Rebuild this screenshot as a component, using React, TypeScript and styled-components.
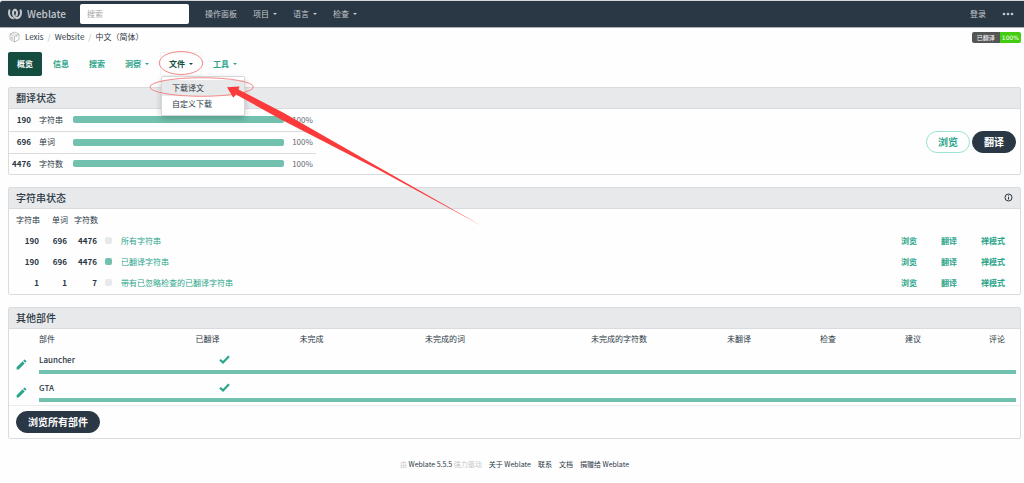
import React from 'react';
import styled, { createGlobalStyle, css } from 'styled-components';
import { SiWeblate } from 'react-icons/si';
import { MdEdit } from 'react-icons/md';

const navy = '#2a3744';
const green = '#2ba58a';
const bar = '#71c1ae';
const line = '#d9dbde';

const GlobalStyle = createGlobalStyle`
  *, *::before, *::after { box-sizing: border-box; }
  body {
    margin: 0;
    background: #fefefe;
    color: ${navy};
    font-family: 'Noto Sans CJK SC', 'Noto Sans', sans-serif;
    font-size: 8px;
    line-height: 12px;
  }
  a { color: inherit; text-decoration: none; }
  button, input { font: inherit; }
  ul, ol { list-style: none; margin: 0; padding: 0; }
`;

const Page = styled.div`
  position: relative;
`;

const NavBar = styled.nav`
  display: flex;
  align-items: center;
  height: 28px;
  padding: 0 10px 0 8px;
  background: ${navy};
  color: #c3c8cd;
  border-top: 1px solid #d5d8da;
  border-bottom: 1px solid #a9afb4;
  border-radius: 3px 0 0 0;
`;

const Brand = styled.a`
  display: flex;
  align-items: center;
  gap: 5px;
  width: 72px;
  font-size: 10px;
  font-weight: 500;
`;

const SearchInput = styled.input`
  width: 109px;
  height: 20px;
  margin-right: 8px;
  padding: 0 7px 1px;
  border: 0;
  border-radius: 2px;
  background: #fff;
  color: ${navy};
  &::placeholder { color: #a3a3a3; opacity: 1; }
`;

const NavList = styled.ul`
  display: flex;
  flex: 1;
`;

const NavLink = styled.a`
  display: flex;
  align-items: center;
  gap: 4px;
  padding: 0 8px;
`;

const Caret = styled.span`
  width: 0;
  border: 2px solid transparent;
  border-top-color: currentColor;
  border-bottom: 0;
`;

const NavEnd = styled.div`
  display: flex;
  align-items: center;
  gap: 16px;
`;

const MoreButton = styled.button`
  display: flex;
  padding: 0;
  border: 0;
  background: none;
  color: inherit;
`;

const Main = styled.main`
  padding: 0 3px 0 8px;
`;

const TopRow = styled.div`
  display: flex;
  justify-content: space-between;
  align-items: center;
  height: 18px;
`;

const Crumbs = styled.ol`
  display: flex;
  align-items: center;
  padding-left: 1px;
  li + li::before {
    content: '/';
    padding: 0 4px;
    color: #b5b9bd;
  }
  li:first-child { padding-right: 5px; }
  li:nth-child(2)::before { content: none; }
  svg { display: block; }
`;

const Badge = styled.a`
  display: flex;
  height: 11px;
  overflow: hidden;
  border-radius: 2px;
  font: 6px/11px 'DejaVu Sans', 'Noto Sans CJK SC', sans-serif;
  color: #fff;
`;

const BadgePart = styled.span<{ $tone: string; $wide?: boolean }>`
  padding: 0 ${p => (p.$wide ? 5 : 2)}px;
  background: ${p => p.$tone};
`;

const Tabs = styled.ul`
  display: flex;
  gap: 2px;
  margin: 6px 0 11px;
`;

const TabItem = styled.li`
  position: relative;
`;

const Tab = styled.a<{ $state?: 'active' | 'open' }>`
  display: flex;
  align-items: center;
  gap: 4px;
  height: 24px;
  padding: 0 9px;
  border-radius: 2px;
  color: ${green};
  font-weight: 700;
  ${p => p.$state === 'active' && css`background: #144d3f; color: #fff;`}
  ${p => p.$state === 'open' && css`box-shadow: inset 0 0 0 1px #f3f4f4; color: #144d3f;`}
`;

const Menu = styled.ul`
  position: absolute;
  z-index: 1;
  top: 100%;
  left: 1px;
  width: 84px;
  padding: 3px 0;
  background: #fff;
  border: 1px solid #d5d7d9;
  border-radius: 2px;
  box-shadow: 0 3px 6px rgba(0, 0, 0, 0.2);
`;

const MenuLink = styled.a<{ $hover?: boolean }>`
  display: block;
  padding: 0 10px;
  line-height: 16px;
  background: ${p => (p.$hover ? '#e8e9ea' : 'transparent')};
`;

const Panel = styled.section`
  margin-bottom: 12px;
  border: 1px solid ${line};
  border-radius: 2px;
`;

const PanelHead = styled.header`
  display: flex;
  align-items: center;
  justify-content: space-between;
  height: 21px;
  padding: 0 7px 1px;
  background: #e8e9eb;
  border-bottom: 1px solid ${line};
`;

const PanelTitle = styled.h4`
  margin: 0;
  font-size: 10px;
  font-weight: 500;
  line-height: 16px;
`;

const StatusBody = styled.div`
  display: flex;
  align-items: center;
  justify-content: space-between;
  padding-right: 4px;
`;

const Table = styled.table`
  width: 100%;
  border-collapse: collapse;
  table-layout: fixed;
  th, td { padding: 0; text-align: right; font-weight: 400; }
`;

const StatusTable = styled(Table)`
  width: 30.5%;
  td { height: 22px; }
  tr:last-child td { height: 21px; }
  tr + tr td { border-top: 1px solid ${line}; }
  td:first-child { width: 22px; font-weight: 700; }
  th { width: 42px; padding-left: 8px; text-align: left; }
  tr + tr th { border-top: 1px solid ${line}; }
  td:last-child { width: 32px; padding-left: 8px; text-align: left; color: #5f6973; }
`;

const Progress = styled.div<{ $thin?: boolean }>`
  height: ${p => (p.$thin ? 4 : 7)}px;
  border-radius: ${p => (p.$thin ? 0 : 2)}px;
  background: ${bar};
`;

const Actions = styled.div`
  display: flex;
  gap: 2px;
`;

const Pill = styled.button<{ $outline?: boolean }>`
  height: 22px;
  padding: 0 11px;
  border: 1px solid ${p => (p.$outline ? '#9be3d2' : navy)};
  border-radius: 11px;
  background: ${p => (p.$outline ? '#fff' : navy)};
  color: ${p => (p.$outline ? green : '#fff')};
  font-size: 10px;
  font-weight: 700;
  line-height: 16px;
`;

const StringTable = styled(Table)`
  margin-bottom: 1px;
  td { height: 21px; font-weight: 700; }
  th { height: 21px; }
  td:nth-child(-n + 3) { padding-right: 1px; }
  td:nth-child(n + 5) { padding-left: 1px; text-align: left; color: ${green}; }
  td:nth-child(5) { padding-left: 6px; font-weight: 400; }
`;

const Swatch = styled.span<{ $on?: boolean }>`
  display: block;
  width: 7px;
  height: 7px;
  margin-left: 7px;
  border-radius: 2px;
  background: ${p => (p.$on ? bar : '#e8e9eb')};
`;

const PartTable = styled(Table)`
  thead th { height: 20px; padding-right: 15px; }
  thead th:nth-child(2), tbody th { padding: 0 0 0 5px; text-align: left; }
  tbody th { height: 21px; font-weight: 500; }
  svg { display: block; margin: 0 auto; }
`;

const CheckCell = styled.td`
  && { padding-right: 5px; }
  svg { margin: 0 0 0 auto; }
`;

const EditCell = styled.td`
  color: ${green};
  && { padding-top: 3px; }
`;

const BarCell = styled.td`
  height: 7px;
  vertical-align: top;
  && { padding: 0 4px 0 5px; }
`;

const PanelFoot = styled.footer`
  padding: 5px 7px;
  border-top: 1px solid #eceded;
`;

const Footer = styled.footer`
  display: flex;
  justify-content: center;
  gap: 7px;
  margin-top: 19px;
  padding: 0 3px 12px 8px;
  font-size: 7px;
`;

const Muted = styled.span`
  color: #c3c6c9;
  a { color: ${navy}; }
`;

const Annotation = styled.svg`
  position: absolute;
  z-index: 2;
  top: 0;
  left: 0;
  pointer-events: none;
`;

const CheckIcon = () => (
  <svg width="11" height="9" viewBox="0 0 11 9" aria-hidden="true">
    <path d="M1 4.7 4 7.4 10 1.3" fill="none" stroke={green} strokeWidth="2.2" />
  </svg>
);

const CubeIcon = () => (
  <svg width="11" height="12" viewBox="0 0 22 24" fill="none" stroke="#aeb3b6" strokeWidth="1.6" aria-hidden="true">
    <path d="M11 2 20 6v11l-9 5-9-5V6zM2 6l9 5 9-5M11 11v11" />
    <path d="m6.500 4 9 4.500v4M5 12v4l3 1.500v-4z" strokeWidth="1.200" />
  </svg>
);

const InfoIcon = () => (
  <svg width="9" height="9" viewBox="0 0 18 18" fill="none" stroke={navy} strokeWidth="2" aria-label="信息">
    <circle cx="9" cy="9" r="7" />
    <path d="M9 8v5M9 4.500v2" />
  </svg>
);

const navItems = [
  { label: '操作面板' },
  { label: '项目', caret: true },
  { label: '语言', caret: true },
  { label: '检查', caret: true },
];

const totals = [
  ['190', '字符串'],
  ['696', '单词'],
  ['4476', '字符数'],
];

const strings = [
  { n: ['190', '696', '4476'], label: '所有字符串', on: false },
  { n: ['190', '696', '4476'], label: '已翻译字符串', on: true },
  { n: ['1', '1', '7'], label: '带有已忽略检查的已翻译字符串', on: false },
];

const partHeads = ['未完成', '未完成的词', '未完成的字符数', '未翻译', '检查', '建议', '评论'];

export default function App() {
  return (
    <Page lang="zh-CN">
      <GlobalStyle />
      <NavBar>
        <Brand href="#">
          <SiWeblate size={14} />
          Weblate
        </Brand>
        <SearchInput type="search" placeholder="搜索" aria-label="搜索" />
        <NavList>
          {navItems.map(item => (
            <li key={item.label}>
              <NavLink href="#">
                {item.label}
                {item.caret && <Caret />}
              </NavLink>
            </li>
          ))}
        </NavList>
        <NavEnd>
          <a href="#">登录</a>
          <MoreButton type="button" aria-label="更多">
            <svg width="12" height="4" viewBox="0 0 12 4" fill="currentColor">
              <circle cx="2" cy="2" r="1.300" />
              <circle cx="6" cy="2" r="1.300" />
              <circle cx="10" cy="2" r="1.300" />
            </svg>
          </MoreButton>
        </NavEnd>
      </NavBar>

      <Main>
        <TopRow>
          <Crumbs>
            <li><CubeIcon /></li>
            <li><a href="#">Lexis</a></li>
            <li><a href="#">Website</a></li>
            <li><a href="#">中文（简体）</a></li>
          </Crumbs>
          <Badge href="#">
            <BadgePart $tone="#555" $wide>已翻译</BadgePart>
            <BadgePart $tone="#44cc11">100%</BadgePart>
          </Badge>
        </TopRow>

        <Tabs>
          <TabItem><Tab href="#" $state="active">概览</Tab></TabItem>
          <TabItem><Tab href="#">信息</Tab></TabItem>
          <TabItem><Tab href="#">搜索</Tab></TabItem>
          <TabItem><Tab href="#">洞察<Caret /></Tab></TabItem>
          <TabItem>
            <Tab href="#" $state="open">文件<Caret /></Tab>
            <Menu>
              <li><MenuLink href="#" $hover>下载译文</MenuLink></li>
              <li><MenuLink href="#">自定义下载</MenuLink></li>
            </Menu>
          </TabItem>
          <TabItem><Tab href="#">工具<Caret /></Tab></TabItem>
        </Tabs>

        <Panel>
          <PanelHead><PanelTitle>翻译状态</PanelTitle></PanelHead>
          <StatusBody>
            <StatusTable>
              <tbody>
                {totals.map(([count, label]) => (
                  <tr key={label}>
                    <td>{count}</td>
                    <th scope="row">{label}</th>
                    <td><Progress /></td>
                    <td>100%</td>
                  </tr>
                ))}
              </tbody>
            </StatusTable>
            <Actions>
              <Pill type="button" $outline>浏览</Pill>
              <Pill type="button">翻译</Pill>
            </Actions>
          </StatusBody>
        </Panel>

        <Panel>
          <PanelHead>
            <PanelTitle>字符串状态</PanelTitle>
            <InfoIcon />
          </PanelHead>
          <StringTable>
            <colgroup>
              <col width="31" />
              <col width="28" />
              <col width="30" />
              <col width="17" />
              <col />
              <col width="40" />
              <col width="40" />
              <col width="40" />
            </colgroup>
            <thead>
              <tr>
                <th scope="col">字符串</th>
                <th scope="col">单词</th>
                <th scope="col">字符数</th>
                <th colSpan={5} />
              </tr>
            </thead>
            <tbody>
              {strings.map(row => (
                <tr key={row.label}>
                  {row.n.map((n, i) => <td key={i}>{n}</td>)}
                  <td><Swatch $on={row.on} /></td>
                  <td><a href="#">{row.label}</a></td>
                  <td><a href="#">浏览</a></td>
                  <td><a href="#">翻译</a></td>
                  <td><a href="#">禅模式</a></td>
                </tr>
              ))}
            </tbody>
          </StringTable>
        </Panel>

        <Panel>
          <PanelHead><PanelTitle>其他部件</PanelTitle></PanelHead>
          <PartTable>
            <colgroup>
              <col width="25" />
              <col />
              <col width="80" />
              <col width="104" />
              <col width="14%" />
              <col width="18%" />
              <col width="104" />
              <col width="85" />
              <col width="85" />
              <col width="84" />
            </colgroup>
            <thead>
              <tr>
                <th />
                <th scope="col">部件</th>
                <th scope="col">已翻译</th>
                {partHeads.map(h => <th scope="col" key={h}>{h}</th>)}
              </tr>
            </thead>
            <tbody>
              {['Launcher', 'GTA'].map(name => (
                <React.Fragment key={name}>
                  <tr>
                    <EditCell rowSpan={2}>
                      <a href="#" aria-label="编辑"><MdEdit size={13} /></a>
                    </EditCell>
                    <th scope="row"><a href="#">{name}</a></th>
                    <CheckCell><CheckIcon /></CheckCell>
                    <td colSpan={7} />
                  </tr>
                  <tr>
                    <BarCell colSpan={9}><Progress $thin /></BarCell>
                  </tr>
                </React.Fragment>
              ))}
            </tbody>
          </PartTable>
          <PanelFoot>
            <Pill type="button">浏览所有部件</Pill>
          </PanelFoot>
        </Panel>
      </Main>

      <Footer>
        <Muted>由 <a href="#">Weblate 5.5.5</a> 强力驱动</Muted>
        <a href="#">关于 Weblate</a>
        <a href="#">联系</a>
        <a href="#">文档</a>
        <a href="#">捐赠给 Weblate</a>
      </Footer>

      <Annotation width="490" height="230" viewBox="0 0 490 230" aria-hidden="true">
        <g fill="none" stroke="#f47c7c" strokeWidth="0.9">
          <ellipse cx="181" cy="63" rx="21.700" ry="11.500" />
          <ellipse cx="201.700" cy="87" rx="51.700" ry="9.300" />
        </g>
        <path d="M227 87.300 239.500 86.500 238.500 89.500 283 112.500 380 168 482 226 380 170.500 281 119.500 236 94.500 233.300 97.800z" fill="#fb3b3b" />
      </Annotation>
    </Page>
  );
}
